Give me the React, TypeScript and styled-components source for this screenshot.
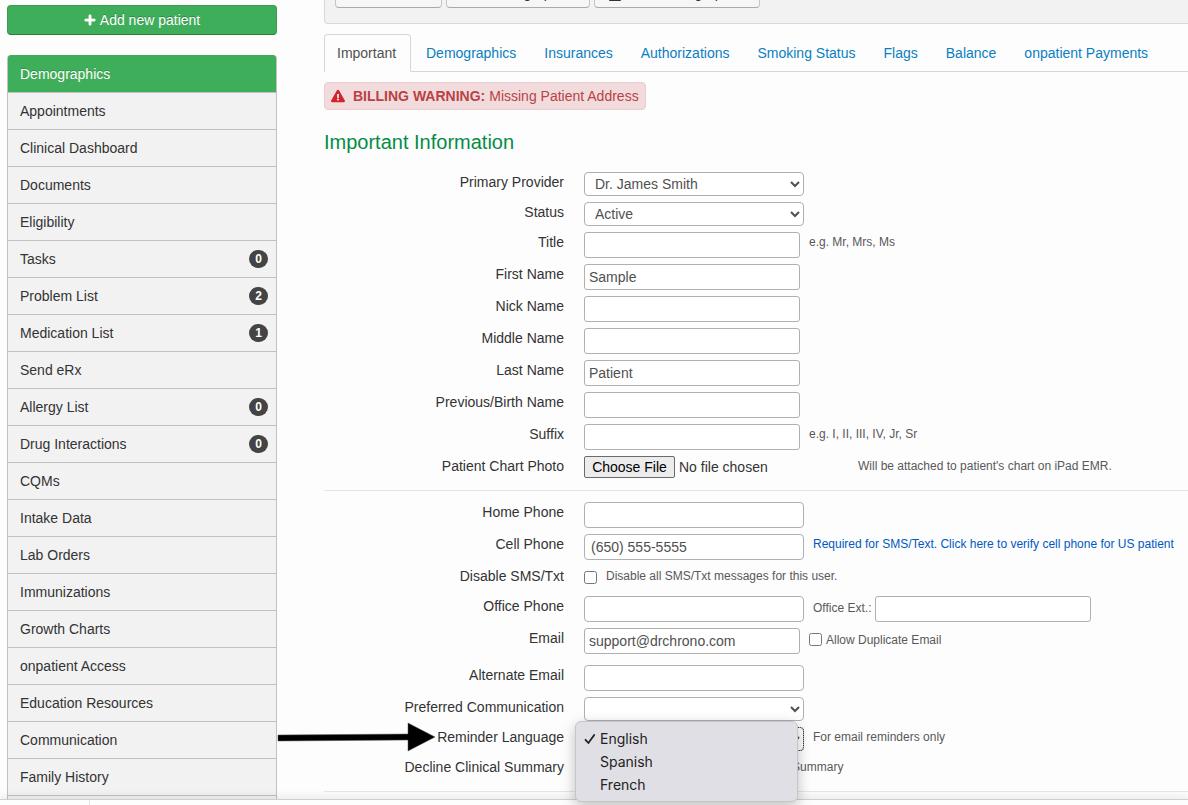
import React from "react";
import styled, { createGlobalStyle, css } from "styled-components";
import { FaPlus, FaExclamationTriangle, FaPrint } from "react-icons/fa";

const GlobalStyle = createGlobalStyle`
  * { box-sizing: border-box; }
  body {
    margin: 0;
    background: #fdfdfd;
    color: #333;
    font-family: "Liberation Sans", Arial, Helvetica, sans-serif;
    font-size: 14px;
    line-height: 20px;
  }
  button, input, select { font-family: inherit; font-size: 14px; }
`;

const Page = styled.div`
  position: relative;
  height: 100vh;
  overflow: hidden;
  display: flex;
  align-items: flex-start;
  gap: 47px;
  padding-left: 7px;
`;

const Sidebar = styled.aside`
  flex: 0 0 270px;
  display: flex;
  flex-direction: column;
  gap: 20px;
  padding-top: 5px;
`;

const AddButton = styled.button`
  display: flex;
  align-items: center;
  justify-content: center;
  gap: 4px;
  height: 30px;
  padding: 0;
  border: 1px solid #389c4f;
  border-bottom-color: #2c7d3f;
  border-radius: 4px;
  background: #3fae5a;
  color: #fff;
  line-height: 20px;
  text-shadow: 0 -1px 0 rgba(0, 0, 0, 0.25);
  svg { stroke: #fff; stroke-width: 24px; }
`;

const NavList = styled.ul`
  list-style: none;
  margin: 0;
  padding: 0;
  border: 1px solid #c1c1c1;
  border-top: 0;
  border-radius: 4px 4px 0 0;
  overflow: hidden;
  background: #f2f2f2;
`;

const NavItem = styled.li`
  border-top: 1px solid #c1c1c1;
  &:first-child { border-top-color: #3fae5a; }
`;

const NavLink = styled.a<{ $active?: boolean }>`
  display: flex;
  align-items: center;
  justify-content: space-between;
  height: 36px;
  padding: 0 8px 0 12px;
  color: #333;
  text-decoration: none;
  ${(p) =>
    p.$active &&
    css`
      background: #3fae5a;
      box-shadow: -1px 0 0 #3fae5a, 1px 0 0 #3fae5a;
      color: #fff;
      text-shadow: 0 -1px 0 rgba(0, 0, 0, 0.2);
    `}
`;

const Badge = styled.span`
  width: 19px;
  height: 18px;
  border-radius: 9px;
  background: #444;
  color: #fff;
  font-size: 12px;
  font-weight: bold;
  line-height: 18px;
  text-align: center;
`;

const Content = styled.main`
  flex: 1;
  min-width: 0;
`;

const Toolbar = styled.div`
  display: flex;
  align-items: flex-end;
  gap: 4px;
  height: 24px;
  padding: 0 10px 15px;
  overflow: hidden;
  border: 1px solid #d8d8d8;
  border-width: 0 0 1px 1px;
  border-radius: 0 0 0 4px;
  background: #f2f2f2;
`;

const ToolButton = styled.button`
  flex: none;
  display: flex;
  align-items: center;
  justify-content: center;
  gap: 2px;
  min-width: 107px;
  height: 30px;
  padding: 0 12px;
  border: 1px solid #c4c4c4;
  border-bottom-color: #aaa;
  border-radius: 4px;
  background: #f6f6f6;
  color: #333;
  line-height: 20px;
  white-space: nowrap;
`;

const Tabs = styled.nav`
  display: flex;
  gap: 2px;
  margin-top: 10px;
  border-bottom: 1px solid #d6d6d6;
`;

const Tab = styled.a<{ $active?: boolean }>`
  margin-bottom: -1px;
  padding: 8px 12px;
  border: 1px solid transparent;
  border-radius: 4px 4px 0 0;
  color: #0a7fc1;
  text-decoration: none;
  white-space: nowrap;
  ${(p) =>
    p.$active &&
    css`
      min-width: 87px;
      border-color: #d6d6d6;
      border-bottom-color: #fdfdfd;
      background: #fdfdfd;
      color: #505050;
    `}
`;

const Warning = styled.div`
  display: inline-flex;
  align-items: center;
  height: 28px;
  margin-top: 10px;
  padding: 0 6px;
  border: 1px solid #ecccd1;
  border-radius: 4px;
  background: #f2dbdc;
  color: #b94244;
  white-space: nowrap;
  svg { margin-right: 8px; color: #d0252d; }
  strong { margin-right: 4px; }
`;

const Heading = styled.h1`
  margin: 12px 0 10px;
  color: #058c45;
  font-size: 20px;
  font-weight: normal;
  line-height: 40px;
`;

const Group = styled.section`
  display: flex;
  flex-direction: column;
  gap: 6px;
  padding-bottom: 10px;
  & + & {
    padding-top: 11px;
    border-top: 1px solid #e6e6e6;
  }
`;

const Row = styled.div<{ $spaced?: boolean }>`
  position: relative;
  display: flex;
  align-items: flex-start;
  min-height: 24px;
  margin-bottom: ${(p) => (p.$spaced ? 5 : 0)}px;
`;

const Label = styled.label`
  flex: 0 0 240px;
  margin-right: 20px;
  color: #333;
  text-align: right;
  white-space: nowrap;
`;

const TextInput = styled.input<{ $wide?: boolean }>`
  width: ${(p) => (p.$wide ? 220 : 216)}px;
  height: 26px;
  padding: 0 ${(p) => (p.$wide ? 6 : 4)}px;
  border: 1px solid #b0b0b0;
  border-radius: ${(p) => (p.$wide ? 4 : 3)}px;
  background: #fff;
  color: #505050;
`;

const Select = styled.select<{ $focused?: boolean }>`
  width: 220px;
  height: 24px;
  padding: 0 0 0 6px;
  border: 1px solid #b0b0b0;
  border-radius: 4px;
  background: #fff;
  color: #505050;
  outline: ${(p) => (p.$focused ? "1px dotted #333" : "none")};
  outline-offset: -1px;
`;

const FileInput = styled.input`
  width: 265px;
  height: 22px;
  color: #333;
  &::file-selector-button {
    height: 22px;
    width: 91px;
    margin: 0 4px 0 0;
    padding: 0;
    border: 1px solid #6b6b6b;
    border-radius: 2px;
    background: #ececec;
    color: #000;
    font-family: inherit;
    font-size: 14px;
  }
`;

const Check = styled.input`
  flex: none;
  width: 13px;
  height: 13px;
  margin: 5px 0 0;
`;

const hintStyle = css`
  margin-left: 9px;
  font-size: 12px;
  white-space: nowrap;
`;

const Hint = styled.span`
  ${hintStyle}
  color: #595959;
`;

const HintLink = styled.a`
  ${hintStyle}
  color: #0059c2;
  text-decoration: none;
`;

const InlineLabel = styled.label`
  ${hintStyle}
  display: flex;
  align-items: flex-start;
  gap: 4px;
  line-height: 24px;
  color: #595959;
`;

const CheckLabel = styled.label`
  ${hintStyle}
  color: #595959;
`;

const Menu = styled.ul`
  position: absolute;
  z-index: 3;
  top: -6px;
  left: 251px;
  width: 223px;
  margin: 0;
  padding: 5px 0;
  list-style: none;
  border: 1px solid #c6c5ca;
  border-radius: 6px;
  background: #e0dfe5;
  box-shadow: 0 4px 14px rgba(0, 0, 0, 0.25);
  color: #222;
  font-family: Inter, sans-serif;
`;

const MenuItem = styled.li`
  display: flex;
  align-items: center;
  gap: 4px;
  height: 23px;
  padding-left: 8px;
  svg { flex: none; }
`;

const Pointer = styled.svg`
  position: absolute;
  left: -47px;
  top: -5px;
`;

const StatusBar = styled.footer`
  position: absolute;
  z-index: 2;
  left: 0;
  right: 0;
  bottom: 0;
  height: 6px;
  border-top: 1px solid #cfcfcf;
  background: #fdfdfd;
  box-shadow: 0 -2px 8px rgba(0, 0, 0, 0.1);
`;

const StatusCell = styled.div`
  width: 90px;
  height: 5px;
  border-right: 1px solid #e2e2e2;
`;

const navItems: { name: string; count?: number }[] = [
  { name: "Demographics" },
  { name: "Appointments" },
  { name: "Clinical Dashboard" },
  { name: "Documents" },
  { name: "Eligibility" },
  { name: "Tasks", count: 0 },
  { name: "Problem List", count: 2 },
  { name: "Medication List", count: 1 },
  { name: "Send eRx" },
  { name: "Allergy List", count: 0 },
  { name: "Drug Interactions", count: 0 },
  { name: "CQMs" },
  { name: "Intake Data" },
  { name: "Lab Orders" },
  { name: "Immunizations" },
  { name: "Growth Charts" },
  { name: "onpatient Access" },
  { name: "Education Resources" },
  { name: "Communication" },
  { name: "Family History" },
  { name: "" },
];

const tabs = [
  "Important",
  "Demographics",
  "Insurances",
  "Authorizations",
  "Smoking Status",
  "Flags",
  "Balance",
  "onpatient Payments",
];

const languages = ["English", "Spanish", "French"];

type FieldProps = {
  id: string;
  label: string;
  value?: string;
  wide?: boolean;
  spaced?: boolean;
  children?: React.ReactNode;
};

function TextField({ id, label, value = "", wide, spaced, children }: FieldProps) {
  return (
    <Row $spaced={spaced}>
      <Label htmlFor={id}>{label}</Label>
      <TextInput id={id} type="text" defaultValue={value} $wide={wide} />
      {children}
    </Row>
  );
}

function SelectField({ id, label, value = "" }: FieldProps) {
  return (
    <Row>
      <Label htmlFor={id}>{label}</Label>
      <Select id={id}>
        <option>{value}</option>
      </Select>
    </Row>
  );
}

export default function App() {
  return (
    <Page>
      <GlobalStyle />
      <Sidebar>
        <AddButton type="button">
          <FaPlus size={12} />
          Add new patient
        </AddButton>
        <NavList>
          {navItems.map((item, i) => (
            <NavItem key={i}>
              <NavLink href="#" $active={i === 0}>
                {item.name}
                {item.count !== undefined && <Badge>{item.count}</Badge>}
              </NavLink>
            </NavItem>
          ))}
        </NavList>
      </Sidebar>

      <Content>
        <Toolbar>
          <ToolButton type="button">Save Patient</ToolButton>
          <ToolButton type="button">Fax Demographics</ToolButton>
          <ToolButton type="button">
            <FaPrint size={16} />
            Print Demographics
          </ToolButton>
        </Toolbar>

        <Tabs>
          {tabs.map((t, i) => (
            <Tab key={t} href="#" $active={i === 0}>
              {t}
            </Tab>
          ))}
        </Tabs>

        <Warning>
          <FaExclamationTriangle size={14} />
          <strong>BILLING WARNING:</strong> Missing Patient Address
        </Warning>

        <Heading>Important Information</Heading>

        <Group>
          <SelectField id="provider" label="Primary Provider" value="Dr. James Smith" />
          <SelectField id="status" label="Status" value="Active" />
          <TextField id="title" label="Title">
            <Hint>e.g. Mr, Mrs, Ms</Hint>
          </TextField>
          <TextField id="first" label="First Name" value="Sample" />
          <TextField id="nick" label="Nick Name" />
          <TextField id="middle" label="Middle Name" />
          <TextField id="last" label="Last Name" value="Patient" />
          <TextField id="birth" label="Previous/Birth Name" />
          <TextField id="suffix" label="Suffix">
            <Hint>e.g. I, II, III, IV, Jr, Sr</Hint>
          </TextField>
          <Row>
            <Label htmlFor="photo">Patient Chart Photo</Label>
            <FileInput id="photo" type="file" />
            <Hint>Will be attached to patient's chart on iPad EMR.</Hint>
          </Row>
        </Group>

        <Group>
          <TextField id="home" label="Home Phone" wide />
          <TextField id="cell" label="Cell Phone" value="(650) 555-5555" wide>
            <HintLink href="#">
              Required for SMS/Text. Click here to verify cell phone for US patient
            </HintLink>
          </TextField>
          <Row>
            <Label htmlFor="sms">Disable SMS/Txt</Label>
            <Check id="sms" type="checkbox" />
            <CheckLabel htmlFor="sms">Disable all SMS/Txt messages for this user.</CheckLabel>
          </Row>
          <TextField id="office" label="Office Phone" wide>
            <InlineLabel>
              Office Ext.:
              <TextInput type="text" />
            </InlineLabel>
          </TextField>
          <TextField id="email" label="Email" value="support@drchrono.com" spaced>
            <InlineLabel>
              <Check type="checkbox" />
              Allow Duplicate Email
            </InlineLabel>
          </TextField>
          <TextField id="alternate" label="Alternate Email" wide />
          <SelectField id="preferred" label="Preferred Communication" />
          <Row>
            <Label htmlFor="language">Reminder Language</Label>
            <Select id="language" $focused>
              {languages.map((l) => (
                <option key={l}>{l}</option>
              ))}
            </Select>
            <Hint>For email reminders only</Hint>
            <Menu role="listbox" aria-label="Reminder Language">
              {languages.map((l, i) => (
                <MenuItem key={l} role="option" aria-selected={i === 0}>
                  <svg width="12" height="12" viewBox="0 0 12 12" fill="none">
                    {i === 0 && (
                      <path
                        d="M1.5 6.8 4.4 10 10.2 2"
                        stroke="#222"
                        strokeWidth="1.8"
                        strokeLinecap="round"
                        strokeLinejoin="round"
                      />
                    )}
                  </svg>
                  {l}
                </MenuItem>
              ))}
            </Menu>
            <Pointer width="160" height="30" viewBox="0 0 160 30">
              <path
                d="M1 13 131 12V1L158 15 131 29V18L1 19Z"
                fill="#000"
                stroke="#555"
                strokeWidth="0.5"
              />
            </Pointer>
          </Row>
          <Row>
            <Label htmlFor="decline">Decline Clinical Summary</Label>
            <Check id="decline" type="checkbox" />
            <CheckLabel htmlFor="decline">Patient declined to receive Clinical Summary</CheckLabel>
          </Row>
        </Group>
        <Group />
      </Content>

      <StatusBar>
        <StatusCell />
      </StatusBar>
    </Page>
  );
}
